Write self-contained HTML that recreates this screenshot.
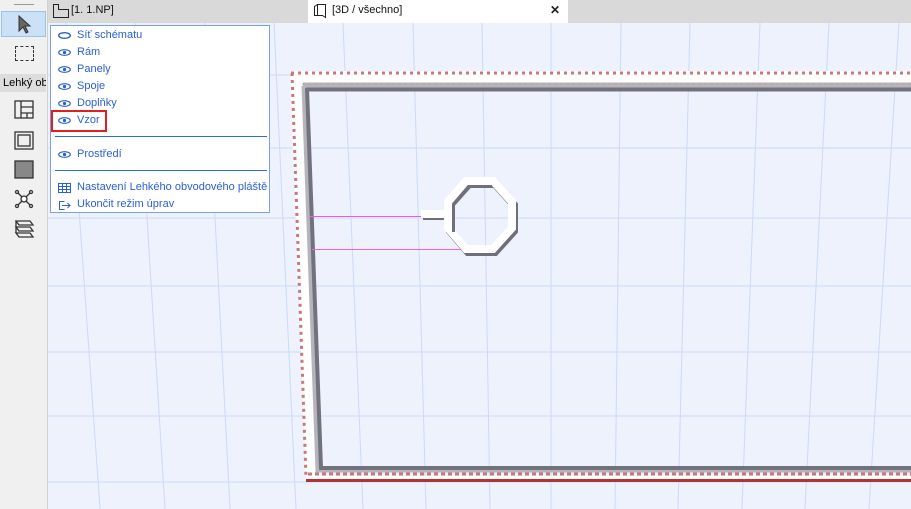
<!DOCTYPE html>
<html><head><meta charset="utf-8"><style>
body{margin:0;width:911px;height:509px;overflow:hidden;background:#edf2fd;font-family:"Liberation Sans",sans-serif;position:relative}
.tb{position:absolute;left:0;top:0;width:47px;height:509px;background:#f0f0f0;border-right:1px solid #d0d0d0}
.tabs{position:absolute;left:48px;top:0;width:863px;height:23px;background:#d9d9d9}
.menu{position:absolute;left:50px;top:25px;width:220px;height:188px;background:#fff;border:1px solid #7aa0e8;box-sizing:border-box}
.it{position:absolute;left:26px;font-size:11px;color:#2a5fd6}
.ey{position:absolute;left:7px;width:13px;height:7px}
</style></head><body>
<svg style="position:absolute;left:0;top:0" width="911" height="509">
<g stroke="#cbdaf6" stroke-width="1">
<line x1="48" y1="75" x2="911" y2="75"/><line x1="48" y1="148" x2="911" y2="148"/><line x1="48" y1="218" x2="911" y2="218"/><line x1="48" y1="286" x2="911" y2="286"/><line x1="48" y1="352" x2="911" y2="352"/><line x1="48" y1="416" x2="911" y2="416"/><line x1="48" y1="482" x2="911" y2="482"/>
<line x1="66" y1="23" x2="100" y2="509"/><line x1="135" y1="23" x2="165" y2="509"/><line x1="205" y1="23" x2="230" y2="509"/><line x1="274" y1="23" x2="296" y2="509"/><line x1="343" y1="23" x2="363" y2="509"/><line x1="413" y1="23" x2="426" y2="509"/><line x1="482" y1="23" x2="490" y2="509"/><line x1="551" y1="23" x2="551" y2="509"/><line x1="621" y1="23" x2="615" y2="509"/><line x1="690" y1="23" x2="678" y2="509"/><line x1="760" y1="23" x2="742" y2="509"/><line x1="829" y1="23" x2="805" y2="509"/><line x1="899" y1="23" x2="869" y2="509"/>
</g>
<polygon points="290,71 911,71 911,84 302,84 316,476 911,476 911,482 306,482" fill="#fff" opacity=".9"/>
<path d="M291,73 L911,73 M292,73 L306,477" stroke="#c87878" stroke-width="3" stroke-dasharray="3,4" fill="none"/>
<path d="M303,85 L911,85 M304,86 L318,470 L911,470" stroke="#b4b4ba" stroke-width="5" fill="none"/>
<path d="M302,84 L911,84" stroke="#d49a9a" stroke-width="1" stroke-dasharray="3,3"/>
<path d="M306,89.5 L911,89.5 M307,88 L321,468 L911,468" stroke="#72727e" stroke-width="4" fill="none"/>
<path d="M308,474 L911,474" stroke="#c87878" stroke-width="3" stroke-dasharray="4,3"/>
<path d="M306,480.5 L911,480.5" stroke="#b03434" stroke-width="3"/>
<rect x="310" y="216" width="111" height="1" fill="#f055f0"/>
<rect x="312" y="249" width="150" height="1" fill="#f060f0"/>
<rect x="423" y="212" width="22" height="8" fill="#70707a"/>
<rect x="421" y="210" width="24" height="8" fill="#fff"/>
<polygon points="466,181 493,181 512,202 512,228 493,249 466,249 448,228 448,202" fill="none" stroke="#6f6f78" stroke-width="8" transform="translate(2,3)"/>
<polygon points="466,181 493,181 512,202 512,228 493,249 466,249 448,228 448,202" fill="none" stroke="#fff" stroke-width="8"/>
<path d="M453.5,232 L453.5,205 L470,186.5 L492,186.5" fill="none" stroke="#70707c" stroke-width="3"/>
</svg>
<div class="tb">
<div style="position:absolute;left:14px;top:4px;width:20px;border-top:1px solid #999"></div>
<div style="position:absolute;left:1px;top:11px;width:45px;height:26px;background:#cce1f5;border:1px solid #99c3ea;box-sizing:border-box"></div>
<svg style="position:absolute;left:16px;top:14px" width="16" height="20"><path d="M3,2 L3,17 L7,13 L10,19 L12,18 L9,12 L14,12 Z" fill="#666" stroke="#333"/></svg>
<div style="position:absolute;left:15px;top:46px;width:17px;height:13px;border:1px dashed #333"></div>
<div style="position:absolute;left:0;top:74px;width:46px;height:18px;background:#ddd;font-size:11px;line-height:18px;padding-left:3px;box-sizing:border-box;overflow:hidden;white-space:nowrap">Lehký obvod</div>
<svg style="position:absolute;left:13px;top:99px" width="22" height="140" fill="none" stroke="#333" stroke-width="1.3">
<rect x="2" y="2" width="18" height="17"/><path d="M8,2V19M8,8H20M8,14H20M14,14V19"/>
<rect x="2" y="33" width="18" height="17"/><rect x="5" y="36" width="12" height="11"/>
<rect x="2" y="62" width="18" height="17" fill="#888"/>
<path d="M5,94 L17,106 M17,94 L5,106" /><circle cx="11" cy="100" r="3" fill="#fff"/><circle cx="4" cy="93" r="1.5"/><circle cx="18" cy="93" r="1.5"/><circle cx="4" cy="107" r="1.5"/><circle cx="18" cy="107" r="1.5"/>
<path d="M3,122H17L20,126H6ZM3,128H17L20,132H6ZM3,134H17L20,138H6ZM3,122V134"/>
</svg>
</div>
<div class="tabs">
<svg style="position:absolute;left:4px;top:3px" width="18" height="16" fill="none" stroke="#222"><path d="M1.5,1.5H6.5V6.5H11V6.5H16.5V14.5H1.5Z"/></svg>
<div style="position:absolute;left:23px;top:4px;font-size:11px;color:#111">[1. 1.NP]</div>
<div style="position:absolute;left:260px;top:0;width:260px;height:23px;background:#fff">
<svg style="position:absolute;left:5px;top:3px" width="14" height="16" fill="none" stroke="#222"><path d="M1.5,3.5L4.5,1.5H12.5V14.5L9.5,12.5H1.5ZM4.5,1.5V12.5"/></svg>
<div style="position:absolute;left:24px;top:4px;font-size:11px;color:#111">[3D / všechno]</div>
<div style="position:absolute;left:242px;top:3px;font-size:12px;font-weight:bold;color:#222">✕</div>
</div></div>
<div class="menu">
<svg class="ey" style="top:6px" viewBox="0 0 13 7"><ellipse cx="6.5" cy="3.5" rx="5.8" ry="2.8" fill="none" stroke="#2a5fd6" stroke-width="1.4"/></svg><div class="it" style="top:3px">Síť schématu</div>
<svg class="ey" style="top:23px" viewBox="0 0 13 7"><ellipse cx="6.5" cy="3.5" rx="5.8" ry="2.8" fill="none" stroke="#2a5fd6" stroke-width="1.2"/><circle cx="6.5" cy="3.5" r="1.6" fill="#2a5fd6"/></svg><div class="it" style="top:20px">Rám</div>
<svg class="ey" style="top:40px" viewBox="0 0 13 7"><ellipse cx="6.5" cy="3.5" rx="5.8" ry="2.8" fill="none" stroke="#2a5fd6" stroke-width="1.2"/><circle cx="6.5" cy="3.5" r="1.6" fill="#2a5fd6"/></svg><div class="it" style="top:37px">Panely</div>
<svg class="ey" style="top:57px" viewBox="0 0 13 7"><ellipse cx="6.5" cy="3.5" rx="5.8" ry="2.8" fill="none" stroke="#2a5fd6" stroke-width="1.2"/><circle cx="6.5" cy="3.5" r="1.6" fill="#2a5fd6"/></svg><div class="it" style="top:54px">Spoje</div>
<svg class="ey" style="top:74px" viewBox="0 0 13 7"><ellipse cx="6.5" cy="3.5" rx="5.8" ry="2.8" fill="none" stroke="#2a5fd6" stroke-width="1.2"/><circle cx="6.5" cy="3.5" r="1.6" fill="#2a5fd6"/></svg><div class="it" style="top:71px">Doplňky</div>
<div style="position:absolute;left:0;top:84px;width:56px;height:22px;border:2px solid #e02020;box-sizing:border-box"></div>
<svg class="ey" style="top:91px" viewBox="0 0 13 7"><ellipse cx="6.5" cy="3.5" rx="5.8" ry="2.8" fill="none" stroke="#2a5fd6" stroke-width="1.2"/><circle cx="6.5" cy="3.5" r="1.6" fill="#2a5fd6"/></svg><div class="it" style="top:88px">Vzor</div>
<div style="position:absolute;left:4px;top:110px;width:212px;border-top:1px solid #2a6ae0"></div>
<svg class="ey" style="top:125px" viewBox="0 0 13 7"><ellipse cx="6.5" cy="3.5" rx="5.8" ry="2.8" fill="none" stroke="#2a5fd6" stroke-width="1.2"/><circle cx="6.5" cy="3.5" r="1.6" fill="#2a5fd6"/></svg><div class="it" style="top:122px">Prostředí</div>
<div style="position:absolute;left:4px;top:144px;width:212px;border-top:1px solid #2a6ae0"></div>
<svg style="position:absolute;left:7px;top:157px" width="13" height="10" fill="none" stroke="#2a5fd6"><rect x=".5" y=".5" width="12" height="9"/><path d="M4.5,.5V9.5M8.5,.5V9.5M.5,3.5H12.5M.5,6.5H12.5"/></svg><div class="it" style="top:155px">Nastavení Lehkého obvodového pláště</div>
<svg style="position:absolute;left:7px;top:174px" width="13" height="11" fill="none" stroke="#2a5fd6"><path d="M6.5,1.5H1.5V9.5H6.5M4,5.5H12M9.5,3L12,5.5L9.5,8"/></svg><div class="it" style="top:172px">Ukončit režim úprav</div>
</div>
</body></html>
